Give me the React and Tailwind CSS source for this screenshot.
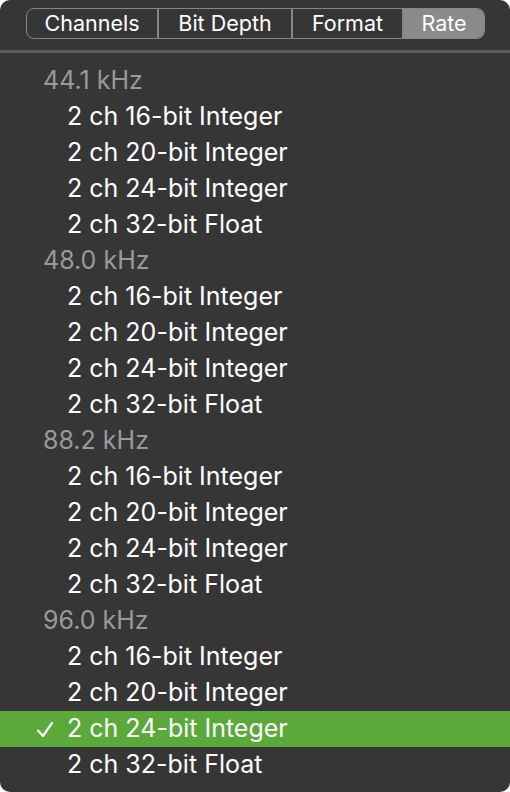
import { useState } from "react";

const rates = ["44.1 kHz", "48.0 kHz", "88.2 kHz", "96.0 kHz"];
const formats = [
  "2 ch 16-bit Integer",
  "2 ch 20-bit Integer",
  "2 ch 24-bit Integer",
  "2 ch 32-bit Float",
];
const tabs = ["Channels", "Bit Depth", "Format", "Rate"];

function Check() {
  return (
    <svg width="18" height="18" viewBox="0 0 18 18" className="absolute left-[36px] top-[10px]">
      <path d="M2 9.5 L7 15 L16 2" fill="none" stroke="white" strokeWidth="2.2" strokeLinecap="round" strokeLinejoin="round" />
    </svg>
  );
}

export default function App() {
  const [selected, setSelected] = useState("96.0 kHz|2 ch 24-bit Integer");
  const [tab, setTab] = useState("Rate");

  return (
    <div className="bg-white w-[510px] h-[792px]" style={{ fontFamily: "Inter, 'Noto Sans', sans-serif" }}>
      <div className="h-full rounded-[10px] bg-[#363636] overflow-hidden">
        <div className="pt-[8px] px-[26px] pb-[11px]">
          <div className="flex h-[31px] w-[459px] rounded-[8px] border border-[#858585] overflow-hidden">
            {tabs.map((t, i) => (
              <button
                key={t}
                type="button"
                onClick={() => setTab(t)}
                className={`flex items-center justify-center text-[21.5px] text-white ${
                  i === 0 ? "w-[132px]" : i === 1 ? "w-[134px]" : i === 2 ? "w-[111px]" : "flex-1"
                } ${i < 3 ? "border-r-2 border-[#858585]" : ""} ${tab === t ? "bg-[#8a8a8a]" : ""}`}
              >
                {t}
              </button>
            ))}
          </div>
        </div>
        <div className="h-[3px] bg-[#5c5c5c]" />
        <div className="pt-[10px]">
          {rates.map((r) => (
            <div key={r}>
              <div className="h-[36px] flex items-center pl-[43px] text-[25px] text-[#9a9a9a]">{r}</div>
              {formats.map((f) => {
                const key = `${r}|${f}`;
                const on = selected === key;
                return (
                  <div
                    key={f}
                    onClick={() => setSelected(key)}
                    className={`relative h-[36px] flex items-center pl-[67px] text-[25px] text-white ${on ? "bg-[#5aa93a]" : ""}`}
                  >
                    {on && <Check />}
                    {f}
                  </div>
                );
              })}
            </div>
          ))}
        </div>
      </div>
    </div>
  );
}
